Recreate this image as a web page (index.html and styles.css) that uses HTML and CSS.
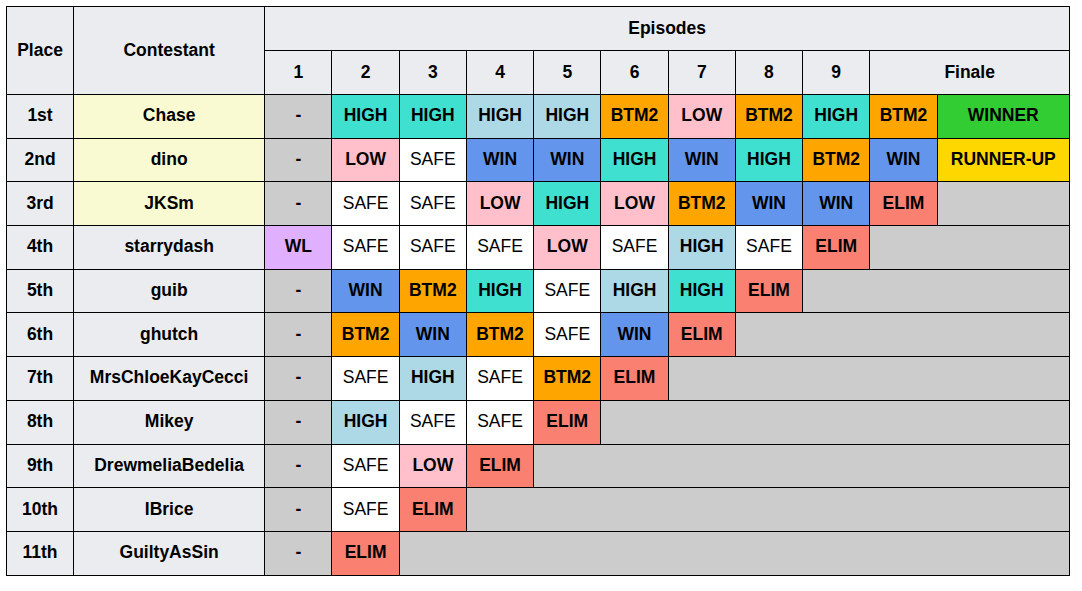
FILE: index.html
```html
<!DOCTYPE html>
<html>
<head>
<meta charset="utf-8">
<link rel="stylesheet" href="styles.css">
</head>
<body>
<table class="results">
  <colgroup>
    <col class="c-place"><col class="c-name">
    <col class="c-ep"><col class="c-ep"><col class="c-ep"><col class="c-ep"><col class="c-ep">
    <col class="c-ep"><col class="c-ep"><col class="c-ep"><col class="c-ep"><col class="c-ep"><col class="c-fin">
  </colgroup>
  <thead>
    <tr class="h1">
      <th rowspan="2">Place</th>
      <th rowspan="2">Contestant</th>
      <th colspan="11">Episodes</th>
    </tr>
    <tr class="h2">
      <th>1</th><th>2</th><th>3</th><th>4</th><th>5</th><th>6</th><th>7</th><th>8</th><th>9</th><th colspan="2">Finale</th>
    </tr>
  </thead>
  <tbody>
    <tr>
      <th>1st</th><th class="top">Chase</th>
      <td class="na">-</td><td class="high">HIGH</td><td class="high">HIGH</td><td class="lhigh">HIGH</td><td class="lhigh">HIGH</td><td class="btm">BTM2</td><td class="low">LOW</td><td class="btm">BTM2</td><td class="high">HIGH</td><td class="btm">BTM2</td><td class="winner">WINNER</td>
    </tr>
    <tr>
      <th>2nd</th><th class="top">dino</th>
      <td class="na">-</td><td class="low">LOW</td><td class="safe">SAFE</td><td class="win">WIN</td><td class="win">WIN</td><td class="high">HIGH</td><td class="win">WIN</td><td class="high">HIGH</td><td class="btm">BTM2</td><td class="win">WIN</td><td class="runner">RUNNER-UP</td>
    </tr>
    <tr>
      <th>3rd</th><th class="top">JKSm</th>
      <td class="na">-</td><td class="safe">SAFE</td><td class="safe">SAFE</td><td class="low">LOW</td><td class="high">HIGH</td><td class="low">LOW</td><td class="btm">BTM2</td><td class="win">WIN</td><td class="win">WIN</td><td class="elim">ELIM</td><td class="na"></td>
    </tr>
    <tr>
      <th>4th</th><th>starrydash</th>
      <td class="wl">WL</td><td class="safe">SAFE</td><td class="safe">SAFE</td><td class="safe">SAFE</td><td class="low">LOW</td><td class="safe">SAFE</td><td class="lhigh">HIGH</td><td class="safe">SAFE</td><td class="elim">ELIM</td><td class="na" colspan="2"></td>
    </tr>
    <tr>
      <th>5th</th><th>guib</th>
      <td class="na">-</td><td class="win">WIN</td><td class="btm">BTM2</td><td class="high">HIGH</td><td class="safe">SAFE</td><td class="lhigh">HIGH</td><td class="high">HIGH</td><td class="elim">ELIM</td><td class="na" colspan="3"></td>
    </tr>
    <tr>
      <th>6th</th><th>ghutch</th>
      <td class="na">-</td><td class="btm">BTM2</td><td class="win">WIN</td><td class="btm">BTM2</td><td class="safe">SAFE</td><td class="win">WIN</td><td class="elim">ELIM</td><td class="na" colspan="4"></td>
    </tr>
    <tr>
      <th>7th</th><th>MrsChloeKayCecci</th>
      <td class="na">-</td><td class="safe">SAFE</td><td class="lhigh">HIGH</td><td class="safe">SAFE</td><td class="btm">BTM2</td><td class="elim">ELIM</td><td class="na" colspan="5"></td>
    </tr>
    <tr>
      <th>8th</th><th>Mikey</th>
      <td class="na">-</td><td class="lhigh">HIGH</td><td class="safe">SAFE</td><td class="safe">SAFE</td><td class="elim">ELIM</td><td class="na" colspan="6"></td>
    </tr>
    <tr>
      <th>9th</th><th>DrewmeliaBedelia</th>
      <td class="na">-</td><td class="safe">SAFE</td><td class="low">LOW</td><td class="elim">ELIM</td><td class="na" colspan="7"></td>
    </tr>
    <tr>
      <th>10th</th><th>IBrice</th>
      <td class="na">-</td><td class="safe">SAFE</td><td class="elim">ELIM</td><td class="na" colspan="8"></td>
    </tr>
    <tr>
      <th>11th</th><th>GuiltyAsSin</th>
      <td class="na">-</td><td class="elim">ELIM</td><td class="na" colspan="9"></td>
    </tr>
  </tbody>
</table>
</body>
</html>
```

FILE: styles.css
```css
html, body {
  margin: 0;
  padding: 0;
  background: #ffffff;
}

body {
  padding: 6px 0 0 6px;
  font-family: "Liberation Sans", Arial, sans-serif;
  font-size: 17.5px;
  color: #000000;
}

.results {
  border-collapse: collapse;
  table-layout: fixed;
  width: 1064px;
}

.c-place { width: 67px; }
.c-name { width: 191px; }
.c-ep { width: 67.2px; }
.c-fin { width: 132px; }

.results th,
.results td {
  border: 1px solid #000000;
  padding: 0 2px 2px;
  text-align: center;
  vertical-align: middle;
  white-space: nowrap;
  overflow: hidden;
  font-weight: bold;
  line-height: 20px;
}

.results th {
  background: #eaecf0;
}

.results thead tr {
  height: 44px;
}

.results tbody tr {
  height: 43.7px;
}

.results th.top { background: #fafad2; }

.na { background: #cccccc; }
.high { background: #40e0d0; }
.lhigh { background: #add8e6; }
.btm { background: #ffa500; }
.low { background: #ffc0cb; }
.win { background: #6495ed; }
.safe { background: #ffffff; font-weight: normal !important; }
.elim { background: #fa8072; }
.winner { background: #32cd32; }
.runner { background: #ffd700; }
.wl { background: #e0b0ff; }
```
